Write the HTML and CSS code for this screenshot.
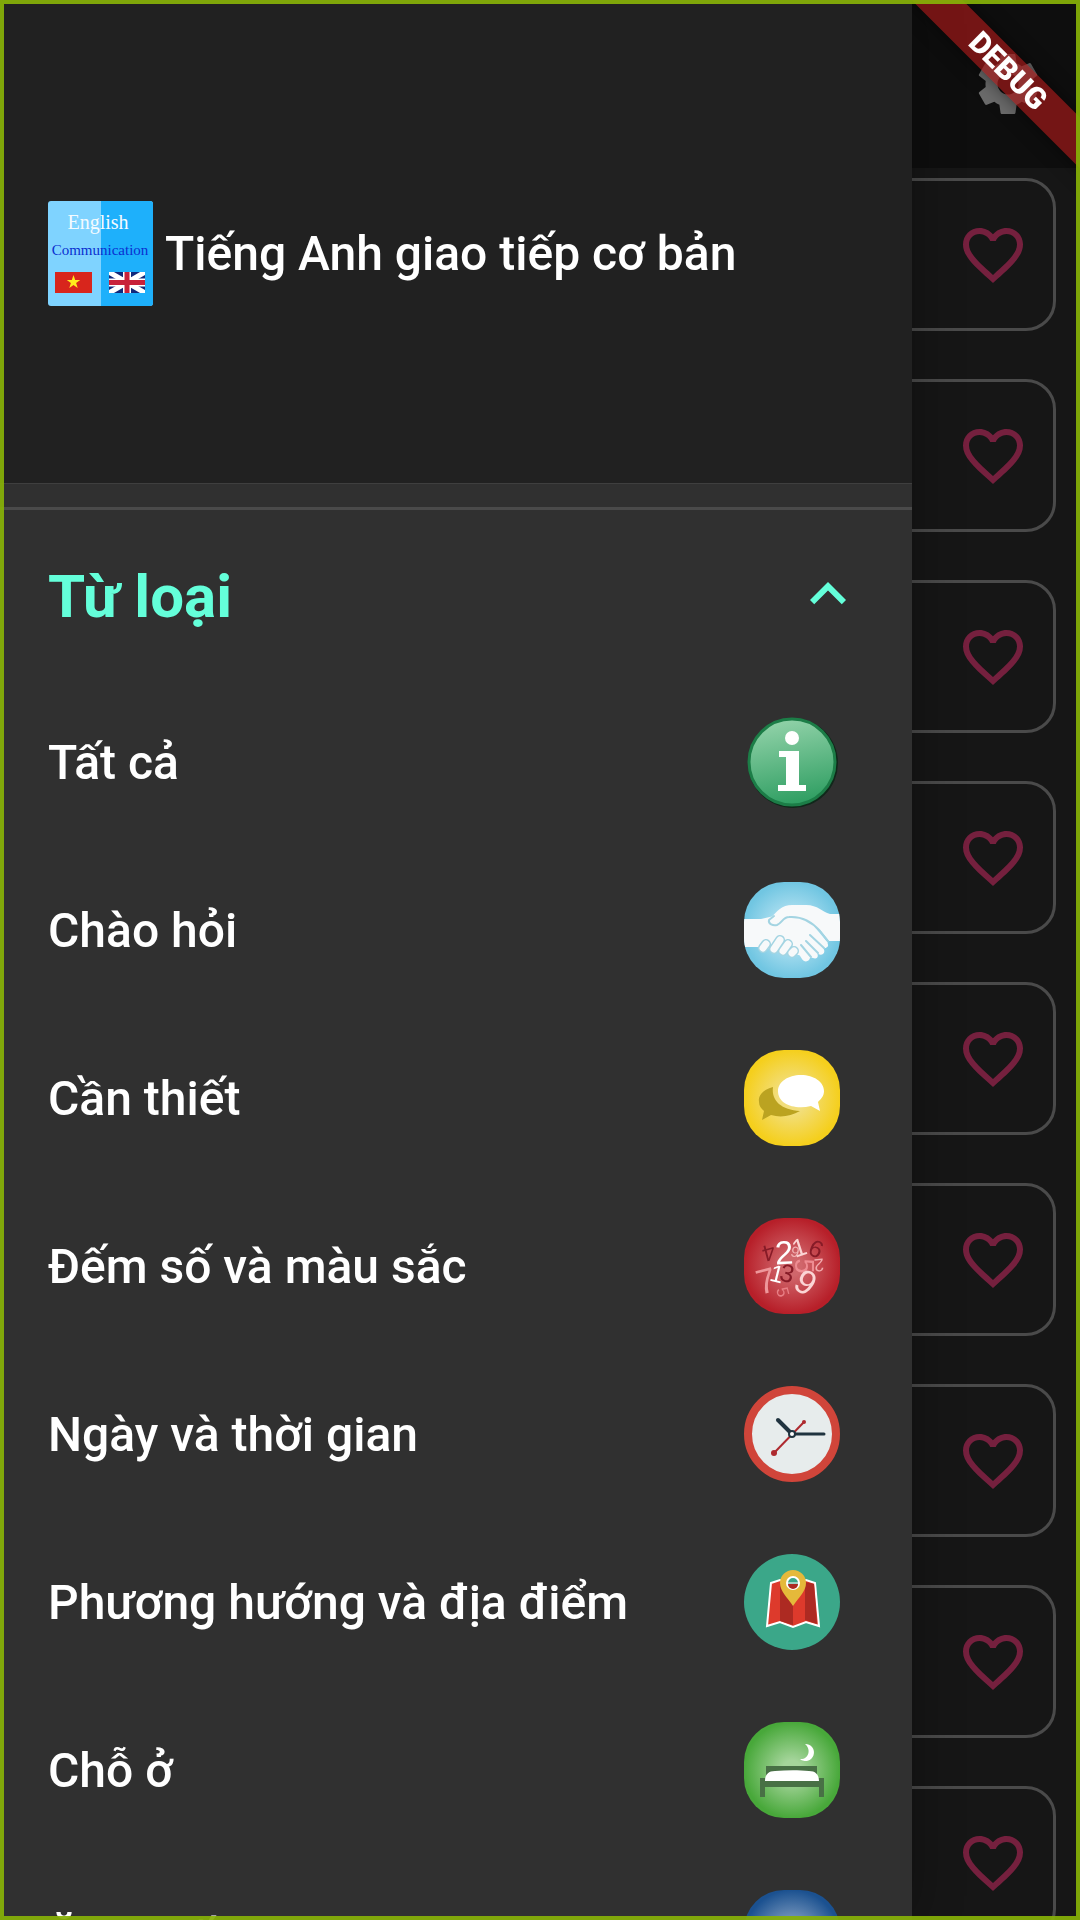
FILE: index.html
```html
<!DOCTYPE html>
<html lang="vi">
<head>
  <meta charset="UTF-8">
  <meta name="viewport" content="width=device-width, initial-scale=1">
  <title>Tiếng Anh giao tiếp cơ bản</title>
  <link rel="stylesheet" href="styles.css">
</head>

<body>

<!-- shared icon shapes -->
<svg class="defs" aria-hidden="true">
  <symbol id="heart" viewBox="0 0 24 24">
    <path d="M16.5 3c-1.74 0-3.41.81-4.5 2.09C10.91 3.81 9.24 3 7.5 3 4.42 3 2 5.42 2 8.5c0 3.78 3.4 6.86 8.55 11.54L12 21.35l1.45-1.32C18.6 15.36 22 12.28 22 8.5 22 5.42 19.58 3 16.5 3zm-4.4 15.55l-.1.1-.1-.1C7.14 14.24 4 11.39 4 8.5 4 6.5 5.5 5 7.5 5c1.54 0 3.04.99 3.57 2.36h1.87C13.46 5.99 14.96 5 16.5 5c2 0 3.5 1.5 3.5 3.5 0 2.89-3.14 5.74-7.9 10.05z"/>
  </symbol>
  <defs>
    <linearGradient id="infoFill" x1="0.3" y1="0" x2="0.5" y2="1">
      <stop offset="0" stop-color="#93d3aa"/><stop offset="1" stop-color="#2f9e62"/>
    </linearGradient>
    <radialGradient id="skyFill"><stop offset="0.3" stop-color="#b4e2f2"/><stop offset="1" stop-color="#71c6e2"/></radialGradient>
    <radialGradient id="yellowFill"><stop offset="0.3" stop-color="#f2de7c"/><stop offset="1" stop-color="#f5cf1c"/></radialGradient>
    <radialGradient id="redFill"><stop offset="0.2" stop-color="#d0666b"/><stop offset="1" stop-color="#b71f29"/></radialGradient>
    <radialGradient id="greenFill"><stop offset="0.2" stop-color="#a5d59b"/><stop offset="1" stop-color="#48a83a"/></radialGradient>
    <radialGradient id="blueFill"><stop offset="0.2" stop-color="#8fa9c8"/><stop offset="1" stop-color="#1b5190"/></radialGradient>
  </defs>
</svg>

<div class="page">
  <header class="app-bar">
    <button class="icon-button" aria-label="Cài đặt">
      <svg class="gear" viewBox="0 0 24 24"><path d="M19.43 12.98c.04-.32.07-.64.07-.98s-.03-.66-.07-.98l2.11-1.65c.19-.15.24-.42.12-.64l-2-3.46c-.12-.22-.39-.3-.61-.22l-2.49 1c-.52-.4-1.08-.73-1.69-.98l-.38-2.65C14.46 2.18 14.25 2 14 2h-4c-.25 0-.46.18-.49.42l-.38 2.65c-.61.25-1.17.59-1.69.98l-2.49-1c-.23-.09-.49 0-.61.22l-2 3.46c-.13.22-.07.49.12.64l2.11 1.65c-.04.32-.07.65-.07.98s.03.66.07.98l-2.11 1.65c-.19.15-.24.42-.12.64l2 3.46c.12.22.39.3.61.22l2.49-1c.52.4 1.08.73 1.69.98l.38 2.65c.03.24.24.42.49.42h4c.25 0 .46-.18.49-.42l.38-2.65c.61-.25 1.17-.59 1.69-.98l2.49 1c.23.09.49 0 .61-.22l2-3.46c.12-.22.07-.49-.12-.64l-2.11-1.65zM12 15.5c-1.93 0-3.5-1.57-3.5-3.5s1.57-3.5 3.5-3.5 3.5 1.57 3.5 3.5-1.57 3.5-3.5 3.5z"/></svg>
    </button>
  </header>

  <main class="cards">
    <div class="card"><button class="icon-button" aria-label="Yêu thích"><svg class="heart"><use href="#heart"/></svg></button></div>
    <div class="card"><button class="icon-button" aria-label="Yêu thích"><svg class="heart"><use href="#heart"/></svg></button></div>
    <div class="card"><button class="icon-button" aria-label="Yêu thích"><svg class="heart"><use href="#heart"/></svg></button></div>
    <div class="card"><button class="icon-button" aria-label="Yêu thích"><svg class="heart"><use href="#heart"/></svg></button></div>
    <div class="card"><button class="icon-button" aria-label="Yêu thích"><svg class="heart"><use href="#heart"/></svg></button></div>
    <div class="card"><button class="icon-button" aria-label="Yêu thích"><svg class="heart"><use href="#heart"/></svg></button></div>
    <div class="card"><button class="icon-button" aria-label="Yêu thích"><svg class="heart"><use href="#heart"/></svg></button></div>
    <div class="card"><button class="icon-button" aria-label="Yêu thích"><svg class="heart"><use href="#heart"/></svg></button></div>
    <div class="card"><button class="icon-button" aria-label="Yêu thích"><svg class="heart"><use href="#heart"/></svg></button></div>
  </main>
</div>

<aside class="drawer">
  <div class="drawer-header">
    <svg class="logo" viewBox="0 0 105 105">
      <rect width="105" height="105" rx="3" fill="#7fd3ff"/>
      <path d="M53 0h49a3 3 0 0 1 3 3v99a3 3 0 0 1-3 3H53z" fill="#1eb0fb"/>
      <text class="logo-text" x="50" y="28" font-size="20" fill="#f4fbff">English</text>
      <text class="logo-text" x="52" y="54" font-size="15" fill="#0a2fd0">Communication</text>
      <rect x="7" y="71" width="37" height="21" fill="#d8251c"/>
      <path d="M25.500 74l1.700 5h5l-4.100 3 1.600 5-4.200-3-4.200 3 1.600-5-4.100-3h5z" fill="#ffeb1c"/>
      <svg x="61" y="71" width="36" height="21" viewBox="0 0 36 21">
        <rect width="36" height="21" fill="#12287a"/>
        <path d="M0 0l36 21M36 0L0 21" stroke="#fff" stroke-width="5"/>
        <path d="M18 0v21M0 10.500h36" stroke="#fff" stroke-width="8"/>
        <path d="M18 0v21M0 10.500h36" stroke="#c8213a" stroke-width="5"/>
      </svg>
    </svg>
    <h1>Tiếng Anh giao tiếp cơ bản</h1>
  </div>

  <nav class="menu">
    <button class="menu-toggle" aria-expanded="true">
      <span>Từ loại</span>
      <svg class="chevron" viewBox="0 0 24 24"><path d="M12 8l-6 6 1.410 1.410L12 10.830l4.590 4.580L18 14z"/></svg>
    </button>

    <a class="menu-item" href="#all">
      <span>Tất cả</span>
      <svg class="item-icon" viewBox="0 0 96 96">
        <circle cx="49" cy="49" r="45" fill="#10281a"/>
        <circle cx="48" cy="48" r="43" fill="url(#infoFill)" stroke="#1c7d47" stroke-width="3"/>
        <circle cx="48" cy="24" r="7" fill="#fff"/>
        <path d="M35 37h20v34h7v6H34v-6h8V43h-7z" fill="#fff"/>
      </svg>
    </a>

    <a class="menu-item" href="#greetings">
      <span>Chào hỏi</span>
      <svg class="item-icon rounded" viewBox="0 0 96 96">
        <rect width="96" height="96" fill="url(#skyFill)"/>
        <g stroke="#a3d4e2" stroke-width="2" stroke-linejoin="round" stroke-linecap="round">
          <path d="M-2 37H17L30 34 60 32 84 61 68 76 50 72 22 66 13 65H-2z" fill="#f7f9fa" stroke="none"/>
          <path d="M96 32H86C78 30 74 23 62 23H48C38 23 33 29 26 37c-3 4 2 7 7 6 5-2 6-8 12-8 14-1 24 7 32 14l8 10h13z" fill="#f7f9fa" stroke="none"/>
          <path d="M30 34L25 38c-1 4 4 6 8 5 5-2 6-8 12-8 14-1 24 6 31 14l8 10" fill="none"/>
          <path d="M64 48L82 60c5 4 0 7-3 6 4 5-2 9-6 5 3 6-3 7-7 3 1 6-6 7-8 3l-7-11" fill="#f7f9fa" stroke="none"/>
          <path d="M66 53l14 13M62 59l12 12M57 63l10 12" fill="none"/>
          <g fill="none" stroke-width="10">
            <path d="M19 66l3-4M30 67l6-9M39 69l5-7M48 71l2-2"/>
            <path d="M19 66l3-4M30 67l6-9M39 69l5-7M48 71l2-2" stroke="#f7f9fa" stroke-width="7"/>
          </g>
        </g>
      </svg>
    </a>

    <a class="menu-item" href="#essentials">
      <span>Cần thiết</span>
      <svg class="item-icon rounded" viewBox="0 0 96 96">
        <rect width="96" height="96" fill="url(#yellowFill)"/>
        <path d="M29 37C18 40 14 46 15 52c0 4 2 6 5 9l-2 9 9-5c10 3 20 1 29-4-18-1-29-10-27-24z" fill="#bba321"/>
        <path d="M57 25c13 0 23 7 23 16 0 5-3 8-6 11l2 9-9-5C50 60 34 54 34 41c0-9 10-16 23-16z" fill="#fff"/>
      </svg>
    </a>

    <a class="menu-item" href="#numbers">
      <span>Đếm số và màu sắc</span>
      <svg class="item-icon rounded digits" viewBox="0 0 96 96">
        <rect width="96" height="96" fill="url(#redFill)"/>
        <text transform="translate(25 35) rotate(165)" y="8" font-size="23" fill="#861b27">4</text>
        <text transform="translate(40 35) rotate(-3)" y="11" font-size="33" fill="#fff">2</text>
        <text transform="translate(51 34) rotate(15)" y="5" font-size="15" fill="#f1b2b4">9</text>
        <text transform="translate(55 29) rotate(-18)" y="9" font-size="25" fill="#fbd5d5">1</text>
        <text transform="translate(72 31) rotate(25)" y="8" font-size="24" fill="#861b27">6</text>
        <text transform="translate(60 48) rotate(90)" y="9" font-size="27" fill="#ee8c92">5</text>
        <text transform="translate(75 47) rotate(175)" y="6" font-size="18" fill="#f3aaae">2</text>
        <text transform="translate(22 63) rotate(-14)" y="12" font-size="35" fill="#ee979b">7</text>
        <text transform="translate(33 56) rotate(14)" y="8" font-size="24" fill="#fff">1</text>
        <text transform="translate(43 56) rotate(14)" y="8" font-size="25" fill="#861b27">3</text>
        <text transform="translate(62 64) rotate(32)" y="12" font-size="34" fill="#fbd5d5">9</text>
        <text transform="translate(39 74) rotate(75)" y="6" font-size="17" fill="#e87f85">5</text>
      </svg>
    </a>

    <a class="menu-item" href="#time">
      <span>Ngày và thời gian</span>
      <svg class="item-icon" viewBox="0 0 96 96">
        <circle cx="48" cy="48" r="44" fill="#e7ecec" stroke="#d0453a" stroke-width="8"/>
        <path d="M30 67l30-31" stroke="#ae2a2f" stroke-width="2"/>
        <circle cx="30" cy="67" r="3" fill="#ae2a2f"/><circle cx="60" cy="36" r="2" fill="#ae2a2f"/>
        <path d="M34 34l14 14" stroke="#20333f" stroke-width="4" stroke-linecap="round"/>
        <path d="M48 48h32" stroke="#20333f" stroke-width="3" stroke-linecap="round"/>
        <circle cx="48" cy="48" r="3" fill="#fff" stroke="#20333f" stroke-width="2"/>
      </svg>
    </a>

    <a class="menu-item" href="#places">
      <span>Phương hướng và địa điểm</span>
      <svg class="item-icon" viewBox="0 0 96 96">
        <circle cx="48" cy="48" r="48" fill="#3ba789"/>
        <path d="M27 29l9-3 13 3 13-3 9 3 4 43-13-4-13 5-13-5-13 4z" fill="#dd3a2c" stroke="#fff" stroke-width="2"/>
        <path d="M36 28l13 2v41l-13-4zM61 28l9 2 3 40-12-4z" fill="#ad2a22"/>
        <path d="M49 52C43 43 36 37 36 29a13 13 0 0 1 26 0c0 8-7 14-13 23z" fill="#e5b93a"/>
        <circle cx="49" cy="29" r="6" fill="#3ba789" stroke="#fff" stroke-width="2"/>
        <path d="M44 30h10a5 5 0 0 1-10 0z" fill="#ad2a22"/><path d="M44 29h10" stroke="#fff" stroke-width="1"/>
      </svg>
    </a>

    <a class="menu-item" href="#accommodation">
      <span>Chỗ ở</span>
      <svg class="item-icon rounded" viewBox="0 0 96 96">
        <rect width="96" height="96" fill="url(#greenFill)"/>
        <path d="M61 22a8.500 8.500 0 1 1-5 15c8 1 12-9 5-15z" fill="#fff"/>
        <path d="M22 44h51v12h7v19h-5V65H21v10h-5V56h6z" fill="#487045"/>
        <path d="M21 59c0-7 4-10 10-10 12-1 24-1 34 0 6 0 10 3 10 10z" fill="#fff"/>
      </svg>
    </a>

    <a class="menu-item" href="#food">
      <span>Ăn &amp; uống</span>
      <svg class="item-icon rounded" viewBox="0 0 96 96">
        <rect width="96" height="96" fill="url(#blueFill)"/>
      </svg>
    </a>
  </nav>
</aside>

<div class="debug-corner"><div class="debug-banner">DEBUG</div></div>
<div class="frame"></div>

</body>
</html>
```
FILE: styles.css
```css
* {
  box-sizing: border-box;
}

body {
  margin: 0;
  height: 100vh;
  overflow: hidden;
  background-color: #161616;
  font-family: Roboto, "Noto Sans", sans-serif;
  color: #ffffff;
}

.defs {
  position: absolute;
  width: 0;
  height: 0;
}

svg {
  display: block;
  flex: none;
}

button {
  border: none;
  padding: 0;
  background: none;
  color: inherit;
  font-family: inherit;
  cursor: pointer;
}

/* screen behind the drawer */
.page {
  height: 100%;
  overflow: hidden;
}

.app-bar {
  display: flex;
  align-items: center;
  justify-content: flex-end;
  height: 168px;
  padding-right: 36px;
  background-color: #0e0e0e;
}

.gear {
  width: 72px;
  height: 72px;
  fill: #6b6b6b;
}

.cards {
  display: flex;
  flex-direction: column;
  gap: 48px;
  padding: 10px 24px;
}

.card {
  display: flex;
  align-items: center;
  justify-content: flex-end;
  flex: none;
  height: 153px;
  padding-right: 24px;
  border: 3px solid #4a4a4a;
  border-radius: 30px;
}

.heart {
  width: 72px;
  height: 72px;
  fill: #75203e;
}

/* drawer */
.drawer {
  position: fixed;
  top: 0;
  bottom: 0;
  left: 0;
  right: 168px;
  overflow: hidden;
  background-color: #303030;
  box-shadow: 0 0 48px rgba(0, 0, 0, 0.3);
}

.drawer-header {
  display: flex;
  align-items: center;
  gap: 12px;
  height: 484px;
  padding: 24px 48px 0;
  border-bottom: 1px solid #3f3f3f;
  background-color: #212121;
}

.drawer-header h1 {
  margin: 0;
  font-size: 48px;
  font-weight: 500;
}

.logo {
  width: 105px;
  height: 105px;
}

.logo-text {
  font-family: "Liberation Serif", serif;
  text-anchor: middle;
}

.menu {
  margin-top: 23px;
  border-top: 3px solid #4a4a4a;
}

.menu-toggle,
.menu-item {
  display: flex;
  align-items: center;
  justify-content: space-between;
  width: 100%;
  height: 168px;
}

.menu-toggle {
  padding: 0 48px;
  font-size: 60px;
  font-weight: 700;
  color: #64ffda;
}

.menu-toggle span {
  padding-top: 4px;
}

.chevron {
  width: 72px;
  height: 72px;
  fill: #64ffda;
}

.menu-item {
  padding: 0 72px 0 48px;
  font-size: 48px;
  font-weight: 500;
  color: #ffffff;
  text-decoration: none;
}

.item-icon {
  width: 96px;
  height: 96px;
}

.rounded {
  border-radius: 40px;
}

.digits {
  font-family: "Liberation Sans", sans-serif;
  text-anchor: middle;
}

/* corner ribbon */
.debug-corner {
  position: fixed;
  top: 0;
  right: 0;
  width: 168px;
  height: 200px;
  overflow: hidden;
  pointer-events: none;
}

.debug-banner {
  position: absolute;
  top: 53px;
  right: -78px;
  width: 300px;
  background-color: rgba(160, 24, 24, 0.7);
  box-shadow: 0 0 18px rgba(0, 0, 0, 0.5);
  font-size: 30px;
  font-weight: 900;
  line-height: 36px;
  text-align: center;
  transform: rotate(45deg);
}

.frame {
  position: fixed;
  inset: 0;
  border: 4px solid rgba(134, 176, 8, 0.93);
  pointer-events: none;
}
```
